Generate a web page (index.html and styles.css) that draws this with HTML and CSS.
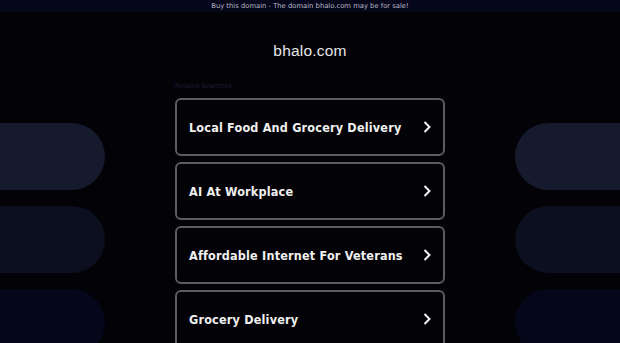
FILE: index.html
```html
<!DOCTYPE html>
<html lang="en">
<head>
    <meta charset="UTF-8">
    <meta name="viewport" content="width=device-width, initial-scale=1.0">
    <title>bhalo.com</title>
    <link rel="stylesheet" href="styles.css">
</head>
<body>
    <div class="topbar">Buy this domain - The domain bhalo.com may be for sale!</div>

    <div class="layout">
        <div class="side side-left">
            <div class="pill pill-1"></div>
            <div class="pill pill-2"></div>
            <div class="pill pill-3"></div>
        </div>

        <main class="center">
            <h1 class="title">bhalo.com</h1>
            <p class="related">Related Searches</p>

            <div class="links">
                <a class="link-card" href="#">
                    <span>Local Food And Grocery Delivery</span>
                    <svg class="chevron" width="8" height="12" viewBox="0 0 8 12"><path d="M1.5 1 L6.5 6 L1.5 11" fill="none" stroke="#f2f2f2" stroke-width="2"/></svg>
                </a>
                <a class="link-card" href="#">
                    <span>AI At Workplace</span>
                    <svg class="chevron" width="8" height="12" viewBox="0 0 8 12"><path d="M1.5 1 L6.5 6 L1.5 11" fill="none" stroke="#f2f2f2" stroke-width="2"/></svg>
                </a>
                <a class="link-card" href="#">
                    <span>Affordable Internet For Veterans</span>
                    <svg class="chevron" width="8" height="12" viewBox="0 0 8 12"><path d="M1.5 1 L6.5 6 L1.5 11" fill="none" stroke="#f2f2f2" stroke-width="2"/></svg>
                </a>
                <a class="link-card" href="#">
                    <span>Grocery Delivery</span>
                    <svg class="chevron" width="8" height="12" viewBox="0 0 8 12"><path d="M1.5 1 L6.5 6 L1.5 11" fill="none" stroke="#f2f2f2" stroke-width="2"/></svg>
                </a>
            </div>
        </main>

        <div class="side side-right">
            <div class="pill pill-1"></div>
            <div class="pill pill-2"></div>
            <div class="pill pill-3"></div>
        </div>
    </div>
</body>
</html>
```

FILE: styles.css
```css
body {
    margin: 0;
    background-color: #030307;
    color: #eee;
    font-family: "DejaVu Sans", Verdana, sans-serif;
    height: 343px;
    overflow: hidden;
}

/* --- Barra do topo --- */
.topbar {
    height: 12px;
    line-height: 12px;
    background-color: #06061a;
    color: #b8b8c6;
    font-size: 6.8px;
    text-align: center;
}

/* --- Layout em 3 colunas --- */
.layout {
    display: grid;
    grid-template-columns: 105px 270px 105px;
    justify-content: space-between;
}

.side {
    display: flex;
    flex-direction: column;
    gap: 16px;
    padding-top: 111px;
}

.pill {
    height: 67px;
}

.side-left .pill {
    border-radius: 0 34px 34px 0;
}

.side-right .pill {
    border-radius: 34px 0 0 34px;
}

.pill-1 {
    background-color: #151a2d;
}

.pill-2 {
    background-color: #0c0f1f;
}

.pill-3 {
    background-color: #05061a;
}

/* --- Coluna central --- */
.title {
    margin: 29px 0 0;
    font-family: "Liberation Sans", Arial, sans-serif;
    font-weight: normal;
    font-size: 15.5px;
    line-height: 20px;
    letter-spacing: 0.2px;
    text-align: center;
    color: #e6e6ea;
}

.related {
    margin: 20px 0 0;
    font-size: 6.5px;
    line-height: 10px;
    color: #1c1c36;
}

.links {
    display: flex;
    flex-direction: column;
    gap: 6px;
    margin-top: 7px;
}

.link-card {
    display: flex;
    align-items: center;
    justify-content: space-between;
    height: 58px;
    box-sizing: border-box;
    padding: 0 12px;
    border: 2px solid #5c5c60;
    border-radius: 6px;
    color: #f0f0f0;
    text-decoration: none;
    font-family: "DejaVu Sans Condensed", "DejaVu Sans", sans-serif;
    font-stretch: condensed;
    font-weight: bold;
    font-size: 12.5px;
    letter-spacing: 0.2px;
    white-space: nowrap;
}

.chevron {
    flex-shrink: 0;
}
```
